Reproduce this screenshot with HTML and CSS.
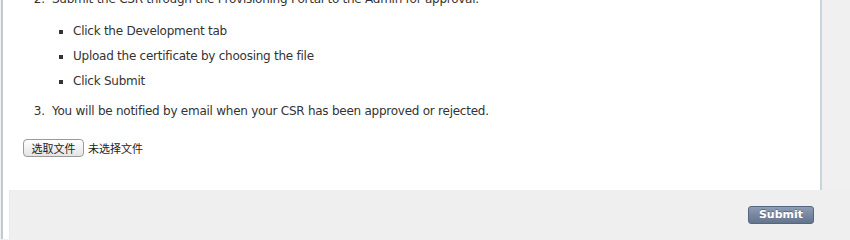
FILE: index.html
```html
<!DOCTYPE html>
<html>
<head>
<meta charset="utf-8">
<link rel="stylesheet" href="styles.css">
</head>
<body>
<div class="page">
  <div class="content">
    <ol class="steps" start="2">
      <li>Submit the CSR through the Provisioning Portal to the Admin for approval.
        <ul class="subs">
          <li>Click the Development tab</li>
          <li>Upload the certificate by choosing the file</li>
          <li>Click Submit</li>
        </ul>
      </li>
      <li>You will be notified by email when your CSR has been approved or rejected.</li>
    </ol>
    <div class="file-row">
      <button class="file-btn">选取文件</button><span class="file-none">未选择文件</span>
    </div>
  </div>
  <div class="footer-wrap">
    <div class="footer">
      <button class="submit">Submit</button>
    </div>
  </div>
</div>
</body>
</html>
```
FILE: styles.css
```css
html, body {
  margin: 0;
  padding: 0;
}
body {
  background: #f0f0f0;
  font-family: "DejaVu Sans", "Noto Sans CJK SC", sans-serif;
  font-size: 12px;
  color: #333;
  height: 239px;
  overflow: hidden;
}
.page {
  margin-left: 1px;
  border-left: 2px solid #bfcad2;
}
.content {
  width: 819px;
  background: #fff;
  border-right: 2px solid #c9d3da;
  height: 190px;
  box-sizing: border-box;
  overflow: hidden;
}
.steps {
  margin: -9px 0 0 0;
  padding-left: 46px;
  line-height: 16px;
  letter-spacing: -0.25px;
}
.steps > li {
  margin-bottom: 0;
  padding-left: 3px;
}
.steps > li::marker {
  letter-spacing: 0;
}
.subs {
  list-style: square;
  margin: 16px 0 14px 0;
  padding-left: 21px;
}
.subs li {
  margin-bottom: 9px;
}
.file-row {
  margin: 20px 0 0 20px;
  display: flex;
  align-items: center;
  gap: 4px;
}
.file-btn {
  font-family: "Noto Sans CJK SC", sans-serif;
  font-size: 11px;
  height: 18px;
  width: 61px;
  padding: 0;
  border: 1px solid #9a9a9a;
  border-radius: 4px;
  background: linear-gradient(#ffffff, #e4e4e4);
  color: #222;
  line-height: 16px;
}
.file-none {
  font-family: "Noto Sans CJK SC", sans-serif;
  font-size: 11px;
  color: #222;
}
.footer-wrap {
  background: #fff;
}
.footer {
  margin-left: 6px;
  margin-right: -1px;
  height: 49px;
  background: #efefef;
  border-left: 1px solid #e3ebf0;
  display: flex;
  justify-content: flex-end;
  align-items: flex-start;
  padding: 16px 37px 0 0;
  box-sizing: border-box;
}
.submit {
  width: 66px;
  height: 18px;
  border: 1px solid #56667f;
  border-radius: 3px;
  background: linear-gradient(#8d9bb3, #64748e);
  color: #fff;
  font-family: "DejaVu Sans", sans-serif;
  font-weight: bold;
  font-size: 11px;
  line-height: 16px;
  text-shadow: 0 -1px 0 rgba(0,0,0,0.3);
  padding: 0;
}
```
